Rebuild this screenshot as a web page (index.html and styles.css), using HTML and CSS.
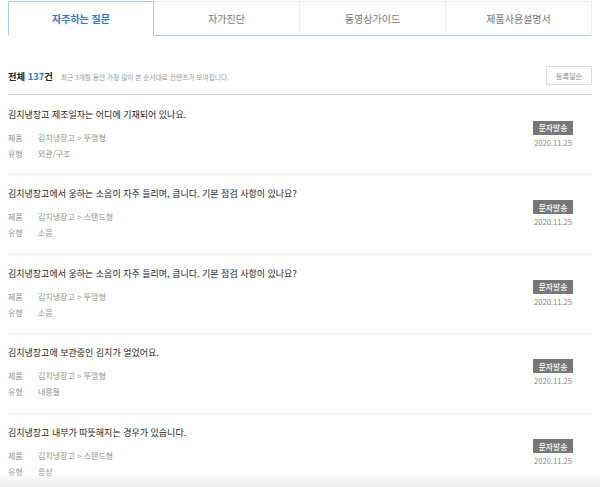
FILE: index.html
```html
<!DOCTYPE html>
<html lang="ko">
<head>
<meta charset="utf-8">
<link rel="stylesheet" href="styles.css">
</head>
<body>
<nav class="tabs">
  <a class="tab active">자주하는 질문</a>
  <a class="tab">자가진단</a>
  <a class="tab">동영상가이드</a>
  <a class="tab">제품사용설명서</a>
</nav>
<div class="head">
  <div class="total"><strong>전체 <em>137</em>건</strong><span class="note">최근 3개월 동안 가장 많이 본 순서대로 컨텐츠가 보여집니다.</span></div>
  <button class="sort">등록일순</button>
</div>
<ul class="list">
  <li class="item">
    <div class="body">
      <p class="title">김치냉장고 제조일자는 어디에 기재되어 있나요.</p>
      <dl class="meta"><dt>제품</dt><dd>김치냉장고 &gt; 뚜껑형</dd><dt>유형</dt><dd>외관/구조</dd></dl>
    </div>
    <div class="side"><span class="badge">문자발송</span><span class="date">2020.11.25</span></div>
  </li>
  <li class="item">
    <div class="body">
      <p class="title">김치냉장고에서 웅하는 소음이 자주 들리며, 큽니다. 기본 점검 사항이 있나요?</p>
      <dl class="meta"><dt>제품</dt><dd>김치냉장고 &gt; 스탠드형</dd><dt>유형</dt><dd>소음</dd></dl>
    </div>
    <div class="side"><span class="badge">문자발송</span><span class="date">2020.11.25</span></div>
  </li>
  <li class="item">
    <div class="body">
      <p class="title">김치냉장고에서 웅하는 소음이 자주 들리며, 큽니다. 기본 점검 사항이 있나요?</p>
      <dl class="meta"><dt>제품</dt><dd>김치냉장고 &gt; 뚜껑형</dd><dt>유형</dt><dd>소음</dd></dl>
    </div>
    <div class="side"><span class="badge">문자발송</span><span class="date">2020.11.25</span></div>
  </li>
  <li class="item">
    <div class="body">
      <p class="title">김치냉장고에 보관중인 김치가 얼었어요.</p>
      <dl class="meta"><dt>제품</dt><dd>김치냉장고 &gt; 뚜껑형</dd><dt>유형</dt><dd>내용물</dd></dl>
    </div>
    <div class="side"><span class="badge">문자발송</span><span class="date">2020.11.25</span></div>
  </li>
  <li class="item">
    <div class="body">
      <p class="title">김치냉장고 내부가 따뜻해지는 경우가 있습니다.</p>
      <dl class="meta"><dt>제품</dt><dd>김치냉장고 &gt; 스탠드형</dd><dt>유형</dt><dd>증상</dd></dl>
    </div>
    <div class="side"><span class="badge">문자발송</span><span class="date">2020.11.25</span></div>
  </li>
</ul>
<div class="fade"></div>
</body>
</html>
```
FILE: styles.css
```css
html, body {
  margin: 0;
  padding: 0;
  background: #fff;
}
body {
  padding: 1px 8px 0;
  font-family: "Noto Sans CJK KR", "Noto Sans", sans-serif;
  color: #222;
  overflow: hidden;
  height: 486px;
}
.tabs {
  display: grid;
  grid-template-columns: repeat(4, 1fr);
  height: 35px;
}
.tab {
  display: flex;
  align-items: center;
  justify-content: center;
  font-size: 10px;
  color: #777;
  border-top: 1px solid #eee;
  border-bottom: 1px solid #a9cbe6;
  border-right: 1px solid #eee;
}
.tab.active {
  color: #2b7bc4;
  font-weight: 700;
  border: 1px solid #a9cbe6;
  border-bottom: 1px solid #fff;
}
.head {
  margin-top: 30px;
  display: flex;
  justify-content: space-between;
  align-items: center;
  padding-bottom: 9px;
  border-bottom: 1px solid #cfcfcf;
}
.total {
  display: flex;
  align-items: baseline;
  gap: 8px;
}
.total strong {
  font-size: 9.3px;
  font-weight: 700;
  color: #222;
}
.total em {
  font-style: normal;
  color: #2b7bc4;
}
.note {
  font-size: 6.7px;
  color: #999;
}
.sort {
  width: 46px;
  height: 19px;
  padding: 0;
  border: 1px solid #ddd;
  background: #fff;
  font-family: inherit;
  font-size: 7.2px;
  color: #888;
}
.list {
  list-style: none;
  margin: 0;
  padding: 0;
}
.item {
  display: flex;
  align-items: center;
  justify-content: space-between;
  height: 78.6px;
  border-bottom: 1px solid #ececec;
  padding-right: 19px;
}
.item:first-child {
  height: 79px;
}
.body {
  display: flex;
  flex-direction: column;
}
.title {
  margin: 0 0 9px;
  font-size: 9px;
  line-height: 13px;
  color: #222;
}
.meta {
  margin: 0;
  display: grid;
  grid-template-columns: 30px auto;
  font-size: 8px;
  line-height: 16px;
  color: #8f8f8f;
}
.meta dt, .meta dd { margin: 0; }
.side {
  display: flex;
  flex-direction: column;
  align-items: center;
  gap: 2px;
}
.badge {
  width: 40px;
  height: 14px;
  display: flex;
  align-items: center;
  justify-content: center;
  background: #777;
  color: #fff;
  font-size: 7.8px;
  font-weight: 500;
}
.date {
  font-size: 7.6px;
  line-height: 12px;
  color: #888;
}
.fade {
  position: fixed;
  left: 0;
  right: 0;
  bottom: 0;
  height: 16px;
  background: linear-gradient(to bottom, rgba(240,240,240,0), rgba(236,236,236,0.9));
  pointer-events: none;
}
```
